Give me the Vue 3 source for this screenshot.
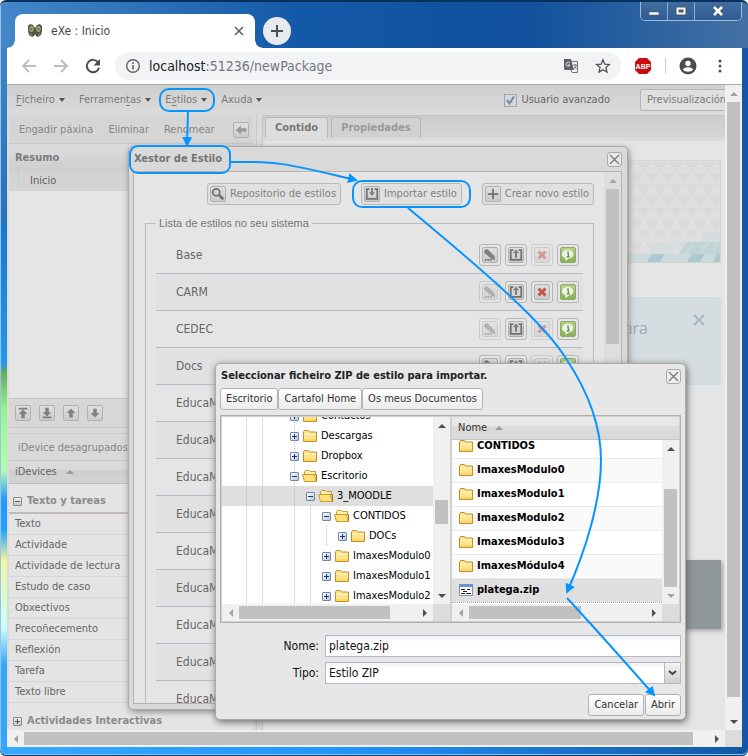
<script setup>
import { h, ref } from 'vue'

const advanced = ref(true)
const fileName = ref('platega.zip')
const fileType = ref('Estilo ZIP')

const menus = [
  { pre: '', key: 'F', post: 'icheiro' },
  { pre: 'Ferramen', key: 't', post: 'as' },
  { pre: 'E', key: 's', post: 'tilos' },
  { pre: 'Axuda', key: '', post: '' },
]
const moves = [
  { label: 'Subir de nivel', d: 'M3 2h10v2H3zM8 4l5 5h-3v5H6V9H3z' },
  { label: 'Baixar de nivel', d: 'M6 2h4v5h3l-5 5-5-5h3zM3 12h10v2H3z' },
  { label: 'Subir', d: 'M8 3l5 5h-3v5H6V8H3z' },
  { label: 'Baixar', d: 'M6 3h4v5h3l-5 5-5-5h3z' },
]
const idevices = ['Texto', 'Actividade', 'Actividade de lectura', 'Estudo de caso', 'Obxectivos', 'Precoñecemento', 'Reflexión', 'Tarefa', 'Texto libre']
const styles = [
  { name: 'Base', edit: true, remove: false },
  { name: 'CARM', edit: false, remove: true },
  { name: 'CEDEC', edit: false, remove: false },
  { name: 'Docs', edit: true, remove: false },
  ...Array.from({ length: 9 }, () => ({ name: 'EducaM', edit: true, remove: false })),
]
// Guides: "." empty cell, "|" dotted line; the last cell holds the expander.
const tree = [
  { guides: '.||.', open: false, name: 'Contactos' },
  { guides: '.||.', open: false, name: 'Descargas' },
  { guides: '.||.', open: false, name: 'Dropbox' },
  { guides: '.||.', open: true, name: 'Escritorio' },
  { guides: '.||.|', open: true, name: '3_MOODLE', selected: true },
  { guides: '.||.||', open: true, name: 'CONTIDOS' },
  { guides: '.||.|||', open: false, name: 'DOCs' },
  { guides: '.||.||', open: false, name: 'ImaxesModulo0' },
  { guides: '.||.||', open: false, name: 'ImaxesModulo1' },
  { guides: '.||.||', open: false, name: 'ImaxesModulo2' },
]
const files = ['CONTIDOS', 'ImaxesModulo0', 'ImaxesModulo1', 'ImaxesModulo2', 'ImaxesMódulo3', 'ImaxesMódulo4', 'platega.zip']

function ScrollBar(props) {
  const [before, thumb, after] = props.parts
  return h('div', { class: ['sb', props.dir], 'aria-hidden': 'true' }, [
    h('i', { class: ['sb-arrow', 'first', { off: props.offStart }] }),
    h('i', { style: { flexGrow: before } }),
    h('i', { class: 'sb-thumb', style: { flexGrow: thumb } }),
    h('i', { style: { flexGrow: after } }),
    h('i', { class: ['sb-arrow', 'last', { off: props.offEnd }] }),
  ])
}
ScrollBar.props = { dir: String, parts: Array, offStart: Boolean, offEnd: Boolean }

function Folder(props) {
  return h('svg', { class: 'folder', viewBox: '0 0 16 16', width: 16, height: 16, 'aria-hidden': 'true' }, props.open
    ? [
        h('path', { d: 'M2.5 12.5V3.5l1-1h4l1 1h5v3', fill: '#fff0b0', stroke: '#c99a30' }),
        h('path', { d: 'M2.5 13.5L.5 6.500H12l2.500 7z', fill: '#ffe27a', stroke: '#c99a30' }),
        h('path', { d: 'M12.500 6.500h2v7', fill: 'none', stroke: '#a87410' }),
      ]
    : [
        h('path', { d: 'M1.500 13.500V4l1-1.500h4l1 1.500h7v9.500z', fill: '#ffe48a', stroke: '#c0902c' }),
        h('path', { d: 'M2.500 6h11', stroke: '#fff7d0', fill: 'none' }),
        h('path', { d: 'M2 12h12', stroke: '#f8c83c', fill: 'none' }),
      ])
}
Folder.props = { open: Boolean }
</script>

<template>
  <div class="desktop">
    <header class="titlebar">
      <div class="tab">
        <svg class="exe" viewBox="0 0 16 16" width="16" height="16" aria-hidden="true">
          <path d="M1 3l2-2 3 1 2 3 2-3 3-1 2 2v5l-1 4-3 2-2-1-1-2-1 2-2 1-3-2-1-4z" fill="#575249" />
          <ellipse cx="4.500" cy="6" rx="2.300" ry="3" fill="#93a86a" />
          <ellipse cx="11.500" cy="6" rx="2.300" ry="3" fill="#93a86a" />
          <circle cx="4.500" cy="6" r="1" fill="#5d6a48" /><circle cx="11.500" cy="6" r="1" fill="#5d6a48" />
          <path d="M3 10l2 3M13 10l-2 3" stroke="#8c9468" />
        </svg>
        <span class="tab-name">eXe : Inicio</span>
        <button class="bare" aria-label="Pechar lapela">
          <svg viewBox="0 0 10 10" width="10" height="10"><path d="M1 1l8 8M9 1L1 9" stroke="#5f6368" stroke-width="1.600" /></svg>
        </button>
      </div>
      <button class="newtab" aria-label="Nova lapela">
        <svg viewBox="0 0 12 12" width="12" height="12"><path d="M6 0v12M0 6h12" stroke="#4a4d51" stroke-width="2" /></svg>
      </button>
      <div class="caption">
        <button aria-label="Minimizar"><svg viewBox="0 0 12 12" width="12" height="12"><path d="M1 7h10v3H1z" fill="#fff" stroke="#4a5568" stroke-width=".6" /></svg></button>
        <button aria-label="Maximizar"><svg viewBox="0 0 12 12" width="12" height="12"><path d="M2.500 3.500h7v5h-7z" fill="none" stroke="#47536a" stroke-width="4" /><path d="M2.500 3.500h7v5h-7z" fill="none" stroke="#fff" stroke-width="2" /></svg></button>
        <button class="wide" aria-label="Pechar"><svg viewBox="0 0 12 12" width="12" height="12"><path d="M2 2l8 8M10 2l-8 8" stroke="#47536a" stroke-width="4" /><path d="M2 2l8 8M10 2l-8 8" stroke="#fff" stroke-width="2.600" /></svg></button>
      </div>
    </header>

    <main class="window">
      <nav class="browserbar">
        <button class="bare nav" aria-label="Atrás"><svg viewBox="0 0 16 16" width="16" height="16"><path d="M15 8H2M8 2L2 8l6 6" fill="none" stroke="#babcbe" stroke-width="1.800" /></svg></button>
        <button class="bare nav" aria-label="Adiante"><svg viewBox="0 0 16 16" width="16" height="16"><path d="M1 8h13M8 2l6 6-6 6" fill="none" stroke="#babcbe" stroke-width="1.800" /></svg></button>
        <button class="bare nav" aria-label="Recargar"><svg viewBox="0 0 16 16" width="16" height="16"><path d="M13.200 4.600A6.200 6.200 0 1 0 14 9.800" fill="none" stroke="#4a4d51" stroke-width="2" /><path d="M15 1v6.500H8.500z" fill="#4a4d51" /></svg></button>
        <div class="omnibox">
          <svg viewBox="0 0 16 16" width="16" height="16" aria-hidden="true"><circle cx="8" cy="8" r="6.300" fill="none" stroke="#5f6368" stroke-width="1.400" /><path d="M8 7v4.500M8 4.300v1.600" stroke="#5f6368" stroke-width="1.600" /></svg>
          <span class="url"><b>localhost</b>:51236/newPackage</span>
          <svg viewBox="0 0 16 16" width="16" height="16" aria-hidden="true"><path d="M9 3.500h5.500v11H9l-1-2.500" fill="#f1f3f4" stroke="#72767a" /><path d="M1 1h7l3 11H2a1 1 0 0 1-1-1z" fill="#5f6368" /><path d="M6.800 5A2 2 0 1 0 7 7H5" fill="none" stroke="#e8eaec" /><path d="M10.500 7h3.500M12 6v1M13.200 7c-.3 2-1 3-2.500 4M11.500 8.500l2 2.500" fill="none" stroke="#72767a" /></svg>
          <svg viewBox="0 0 16 16" width="16" height="16" aria-hidden="true"><path d="M8 1.800l1.800 4.300 4.700.4-3.600 3 1.100 4.600L8 11.700l-4 2.400 1.100-4.600-3.600-3 4.700-.4z" fill="none" stroke="#4f5357" stroke-width="1.300" /></svg>
        </div>
        <svg class="abp" viewBox="0 0 18 18" width="18" height="18" aria-label="ABP"><path d="M5 1h8l4 4v8l-4 4H5l-4-4V5z" fill="#c70d0d" /><text x="9" y="12" text-anchor="middle">ABP</text></svg>
        <span class="rule"></span>
        <svg viewBox="0 0 18 18" width="18" height="18" aria-hidden="true"><circle cx="9" cy="9" r="8.500" fill="#4a4d51" /><circle cx="9" cy="6.500" r="2.700" fill="#fff" /><path d="M4 12.500c1.200-3 8.800-3 10 0-1.500 3-8.500 3-10 0z" fill="#fff" /></svg>
        <svg class="dots" viewBox="0 0 4 16" width="4" height="16" aria-hidden="true"><circle cx="2" cy="3" r="1.500" /><circle cx="2" cy="8" r="1.500" /><circle cx="2" cy="13" r="1.500" /></svg>
      </nav>

      <div class="viewport">
        <div class="page">
          <div class="menubar">
            <button v-for="m in menus" :key="m.post + m.pre" class="menu">{{ m.pre }}<u>{{ m.key }}</u>{{ m.post }}<i class="caret"></i></button>
            <label class="advanced"><span class="check"><input v-model="advanced" type="checkbox" /><svg v-if="advanced" viewBox="0 0 13 13" width="13" height="13" aria-hidden="true"><path d="M3 6l2.500 3.500L10 2.500" fill="none" stroke="#7584a8" stroke-width="2" /></svg></span>Usuario avanzado</label>
            <button class="preview">Previsualización</button>
          </div>
          <div class="columns">
            <aside>
              <div class="pagetools">
                <button class="bare">Engadir páxina</button>
                <button class="bare">Eliminar</button>
                <button class="bare">Renomear</button>
                <button class="tool" aria-label="Contraer"><svg viewBox="0 0 16 16" width="14" height="14"><path d="M2 8l6-5v3h6v4H8v3z" /></svg></button>
              </div>
              <section class="outline">
                <h2>Resumo</h2>
                <div class="node"><i></i>Inicio</div>
              </section>
              <div class="moves">
                <button v-for="m in moves" :key="m.label" class="tool" :aria-label="m.label"><svg viewBox="0 0 16 16" width="14" height="14"><path :d="m.d" /></svg></button>
              </div>
              <section class="idev">
                <div class="ungroup">iDevice desagrupados</div>
                <div class="idev-head">iDevices <i class="sort"></i></div>
                <h3><i class="exp"></i>Texto y tareas</h3>
                <ul><li v-for="d in idevices" :key="d">{{ d }}</li></ul>
                <h3 class="closed"><i class="exp plus"></i>Actividades Interactivas</h3>
              </section>
            </aside>
            <section class="work">
              <div class="worktabs">
                <button class="on">Contido</button><button>Propiedades</button>
              </div>
              <div class="canvas">
                <div class="banner">
                  <svg viewBox="0 0 100 102" width="100" height="102" aria-hidden="true">
                    <defs><pattern id="tri" width="16" height="23" patternUnits="userSpaceOnUse"><path d="M1 1h14L8 11.500zM-7 12.500H7L0 23zM9 12.500h14L16 23z" fill="#dadada" /></pattern></defs>
                    <rect width="100" height="102" fill="url(#tri)" />
                    <path d="M0 93h100v9H0z" fill="#cddadc" /><path d="M66 81h34v12H59z" fill="#c0d3d6" />
                    <path d="M86 70h14v11H79zM40 81h18l-7 12H31z" fill="#d5dddf" /><path d="M32 93h13l-6 9H26zM72 93h13l-6 9H66zM96 93h4v9H93z" fill="#aecace" />
                    <path d="M66 93l8-12M80 93l8-12M92 93l6-12M15 102l6-9M55 102l6-9" stroke="#cbdadd" stroke-width="2" />
                  </svg>
                </div>
                <div class="alert"><span>para</span><button class="bare" aria-label="Pechar aviso"><svg viewBox="0 0 12 12" width="12" height="12"><path d="M1 1l10 10M11 1L1 11" stroke="#a9bac3" stroke-width="2.400" /></svg></button></div>
                <div class="block"></div>
              </div>
            </section>
          </div>
        </div>
        <ScrollBar dir="v" :parts="[0, 594, 16]" off-start />
      </div>
      <div class="bottomscroll"><ScrollBar dir="h" :parts="[0, 668, 15]" off-start /><i class="corner"></i></div>
    </main>

    <section class="dialog styles" aria-label="Xestor de Estilo">
      <header><h2>Xestor de Estilo</h2><button class="close" aria-label="Pechar"><svg viewBox="0 0 11 11" width="11" height="11"><path d="M1 1l9 9M10 1l-9 9" /></svg></button></header>
      <div class="frame">
        <div class="styles-body">
          <div class="actions">
            <button class="act"><span class="tool"><svg viewBox="0 0 16 16" width="14" height="14"><circle cx="6" cy="6" r="4" class="ln" /><path d="M9 9l5 5" class="ln thick" /></svg></span>Repositorio de estilos</button>
            <button class="act"><span class="tool"><svg viewBox="0 0 16 16" width="14" height="14"><path d="M5 2.500H2v11h12v-11h-3M8 1v7" class="ln" /><path d="M4.500 6h7L8 10z" /></svg></span>Importar estilo</button>
            <button class="act"><span class="tool"><svg viewBox="0 0 16 16" width="14" height="14"><path d="M8 2v12M2 8h12" class="ln" /></svg></span>Crear novo estilo</button>
          </div>
          <fieldset>
            <legend>Lista de estilos no seu sistema</legend>
            <div v-for="(s, i) in styles" :key="i" class="style-row">
              <span>{{ s.name }}</span>
              <button :disabled="!s.edit" aria-label="Editar"><span class="tool"><svg viewBox="0 0 16 16" width="14" height="14"><path d="M2 2l3-1 8 8 1 5-5-2-8-7z" /><path d="M2 13.500h2M5 13.500h2M8 13.500h2" class="ln" /></svg></span></button>
              <button aria-label="Exportar"><span class="tool"><svg viewBox="0 0 16 16" width="14" height="14"><path d="M5 2.500H2v11h12v-11h-3M8 11V4" class="ln" /><path d="M4.500 6h7L8 1.500z" /></svg></span></button>
              <button :disabled="!s.remove" class="del" aria-label="Eliminar"><span class="tool"><svg viewBox="0 0 16 16" width="14" height="14"><path d="M4 4l8 8M12 4l-8 8" /></svg></span></button>
              <button class="info" aria-label="Información"><span class="tool"><svg viewBox="0 0 16 16" width="14" height="14"><path d="M8 2c8 0 8 10 1 10l-4 3v-3.500C-1 10 0 2 8 2z" fill="#edf1e6" /><path d="M7 6.500h1.500V10M8 3.500v1.800M6.500 10h3.500" fill="none" stroke="#71954c" stroke-width="1.500" /></svg></span></button>
            </div>
          </fieldset>
        </div>
        <ScrollBar dir="v" :parts="[0, 155, 342]" off-start />
      </div>
    </section>

    <section class="dialog picker" aria-label="Seleccionar ficheiro">
      <header><h2>Seleccionar ficheiro ZIP de estilo para importar.</h2><button class="close" aria-label="Pechar"><svg viewBox="0 0 11 11" width="11" height="11"><path d="M1 1l9 9M10 1l-9 9" /></svg></button></header>
      <div class="places"><button class="btn">Escritorio</button><button class="btn">Cartafol Home</button><button class="btn">Os meus Documentos</button></div>
      <div class="panes">
        <div class="pane">
          <div class="pane-main">
            <div class="clip">
              <ul class="tree">
                <li v-for="(n, i) in tree" :key="i" :class="{ selected: n.selected }">
                  <i v-for="(g, j) in n.guides" :key="j" class="guide" :class="{ line: g === '|' }"></i>
                  <i class="guide" :class="{ line: n.guides.length === 4 }"><i class="exp blue" :class="{ plus: !n.open }"></i></i>
                  <Folder :open="n.open" /><span>{{ n.name }}</span>
                </li>
              </ul>
            </div>
            <ScrollBar dir="v" :parts="[66, 23, 63]" />
          </div>
          <div class="pane-foot"><ScrollBar dir="h" :parts="[0, 151, 26]" off-start /><i class="corner"></i></div>
        </div>
        <div class="pane">
          <div class="col-head"><span>Nome</span><i class="sort"></i></div>
          <div class="pane-main">
            <div class="clip">
              <table class="files" aria-label="Nome">
                <tbody>
                  <tr v-for="(f, i) in files" :key="f" :class="{ picked: i === 6 }">
                    <td><div class="cell">
                      <svg v-if="i === 6" class="folder" viewBox="0 0 16 16" width="16" height="16" aria-hidden="true"><path d="M1.500 2.500h13v11h-13z" fill="#fff" stroke="#7b8fb8" /><path d="M1 2h14v3H1z" fill="#6f93cc" /><path d="M3 7.500h4M5 9.500h4M3 11.500h4M9 7.500h3M8 11.500h5" stroke="#222" /></svg>
                      <Folder v-else /><span>{{ f }}</span>
                    </div></td>
                  </tr>
                </tbody>
              </table>
            </div>
            <ScrollBar dir="v" :parts="[32, 99, 0]" off-end />
          </div>
          <div class="pane-foot"><ScrollBar dir="h" :parts="[0, 112, 64]" off-start /><i class="corner"></i></div>
        </div>
      </div>
      <form @submit.prevent>
        <label for="fname">Nome:</label><input id="fname" v-model="fileName" type="text" />
        <label for="ftype">Tipo:</label>
        <div class="combo"><select id="ftype" v-model="fileType"><option>Estilo ZIP</option></select><span class="trigger"><svg viewBox="0 0 9 6" width="9" height="6"><path d="M1 1l3.500 3L8 1" fill="none" stroke="#444" stroke-width="2" /></svg></span></div>
        <div class="submit"><button class="btn">Cancelar</button><button class="btn">Abrir</button></div>
      </form>
    </section>

    <svg class="marks" viewBox="0 0 748 756" width="748" height="756" aria-hidden="true">
      <defs><marker id="tip" viewBox="0 0 10 10" refX="8" refY="5" markerWidth="10" markerHeight="10" markerUnits="userSpaceOnUse" orient="auto"><path d="M0 0l10 5-10 5z" fill="#0894ff" /></marker></defs>
      <g fill="none" stroke="#0894ff" stroke-width="2">
        <rect x="160" y="89" width="54" height="22" rx="9" />
        <rect x="130" y="146" width="100" height="27" rx="8" />
        <rect x="353" y="181" width="117" height="26" rx="9" />
        <g marker-end="url(#tip)">
          <path d="M188 111l-1 34" />
          <path d="M231 162c50-1 60 3 125 18" />
          <path d="M408 208C490 276 545 324 567 360C590 395 601 430 601 460C601 500 586 550 567 592" />
          <path d="M567 598C592 625 625 662 654 695" />
        </g>
      </g>
    </svg>
  </div>
</template>

<style>
body { margin: 0; }
.sb { display: flex; flex: none; background: #f0f0f0; }
.sb.v { flex-direction: column; width: 17px; }
.sb.h { height: 17px; flex: 1; min-width: 0; }
.sb > i { flex: 0 0 0; }
.sb .sb-thumb { background: #c1c1c1; }
.sb.v .sb-thumb { margin: 0 2px; }
.sb.h .sb-thumb { margin: 2px 0; }
.sb .sb-arrow { flex: 0 0 17px; display: grid; place-items: center; }
.sb .sb-arrow::after { content: ""; border: 4px solid transparent; }
.sb.v .first::after { border-top: 0; border-bottom-color: #505050; }
.sb.v .last::after { border-bottom: 0; border-top-color: #505050; }
.sb.h .first::after { border-left: 0; border-right-color: #505050; }
.sb.h .last::after { border-right: 0; border-left-color: #505050; }
.sb.v .first.off::after { border-bottom-color: #a3a3a3; }
.sb.v .last.off::after { border-top-color: #a3a3a3; }
.sb.h .first.off::after { border-right-color: #a3a3a3; }
.folder { flex: none; display: block; }
</style>

<style scoped>
* { box-sizing: border-box; }
.desktop {
  position: relative; display: flex; flex-direction: column; height: 100vh; min-height: 700px; overflow: hidden;
  padding: 0 6px 9px 7px; font: 12px/16px "DejaVu Sans Condensed", Tahoma, "Noto Sans", sans-serif; color: #666;
  border-top: 2px solid #06305e; border-radius: 6px;
  box-shadow: inset 0 -1px #0b3c70, inset 0 -2px #8cc4f0, inset 1px 0 #9cc3e6;
  background:
    linear-gradient(90deg, #4487c9, #1459a8 40%, #10509c 70%, #4371a4) 0 0 / 100% 46px no-repeat,
    linear-gradient(#4487c9, #2873bb 29%, #1878d0 29.500%, #2298ee 48%, #67a860 49%, #90f58a 54%, #b5ffb0 62%, #2398ff 66%, #20a0ff 70%, #f0f79a 74%, #c8ffff 83%, #30a5ff 88%) 0 0 / 8px 100% no-repeat,
    linear-gradient(90deg, #38a9ff, #2095ff 45%, #1257a5);
}
button { font: inherit; color: inherit; padding: 0; margin: 0; white-space: nowrap; }
h2, h3, ul { margin: 0; padding: 0; list-style: none; font-size: inherit; }
.bare { border: 0; background: none; display: inline-flex; }
.titlebar { display: flex; align-items: flex-end; height: 46px; flex: none; padding-left: 8px; }
.tab { position: relative; display: flex; align-items: center; width: 240px; height: 34px; padding: 0 11px 0 12px; background: #fff; border-radius: 8px 8px 0 0; color: #45494d; }
.tab::before, .tab::after { content: ""; position: absolute; bottom: 0; width: 7px; height: 7px; }
.tab::before { right: 100%; background: radial-gradient(circle at 0 0, transparent 6px, #fff 7px); }
.tab::after { left: 100%; background: radial-gradient(circle at 100% 0, transparent 6px, #fff 7px); }
.tab-name { flex: 1; padding-left: 8px; }
.newtab { display: grid; place-items: center; width: 28px; height: 28px; margin: 0 0 3px 8px; border: 0; border-radius: 50%; background: #e8eaed; }
.caption { display: flex; align-self: flex-start; margin-left: auto; border: 1px solid #9db8d8; border-top: 0; border-radius: 0 0 5px 5px; overflow: hidden; }
.caption button { display: grid; place-items: center; width: 27px; height: 18px; border: 0; border-right: 1px solid #8eabce; background: linear-gradient(#416c9f, #2f5c94); }
.caption .wide { width: 46px; border-right: 0; }
.window { display: flex; flex-direction: column; flex: 1; min-height: 0; }
.browserbar { display: flex; align-items: center; height: 36px; flex: none; background: #fff; padding: 0 20px 0 14px; }
.nav { margin-right: 16px; }
.nav + .nav + .nav { margin-right: 14px; }
.omnibox { display: flex; align-items: center; flex: 1; height: 28px; margin-right: 13px; padding: 0 10px; border-radius: 14px; background: #f1f3f4; gap: 16px; }
.url { flex: 1; margin-left: -8px; font-size: 14px; color: #74787c; }
.url b { font-weight: normal; color: #202124; }
.abp text { font: bold 7px "Liberation Sans", sans-serif; fill: #fff; }
.rule { width: 1px; height: 16px; margin: 0 13px; background: #ccc; }
.dots { margin-left: 21px; fill: #4a4d51; }
.viewport { display: flex; flex: 1; min-height: 0; border-top: 1px solid #a9a9a9; }
.page { flex: 1; min-width: 0; display: flex; flex-direction: column; background: #dadada; overflow: hidden; }
.menubar { display: flex; align-items: center; flex: none; height: 30px; padding-left: 9px; background: linear-gradient(#cfcfcf, #dbdbdb); color: #7a7a7a; font-size: 11px; }
.menu { display: flex; align-items: center; border: 0; background: none; margin-right: 14px; }
.menu u { text-underline-offset: 2px; }
.caret { margin-left: 4px; border: 3px solid transparent; border-top: 4px solid #555; border-bottom: 0; }
.advanced { display: flex; align-items: center; gap: 4px; margin-left: auto; margin-right: 30px; color: #666; }
.check { display: grid; }
.check > * { grid-area: 1 / 1; }
.advanced input { width: 13px; height: 13px; margin: 0; appearance: none; border: 1px solid #a0a4ac; background: #d5d8de; }
.check svg { pointer-events: none; }
.preview { width: 85px; height: 22px; padding-left: 6px; border: 1px solid #b5b5b5; border-right: 0; border-radius: 3px 0 0 3px; background: #dfdfdf; text-align: left; overflow: hidden; }
.columns { display: flex; flex: 1; min-height: 0; }
aside { display: flex; flex-direction: column; width: 250px; flex: none; padding: 1px 3px 0 2px; border-right: 1px solid #c9c9c9; }
.pagetools { display: flex; align-items: center; gap: 15px; height: 28px; flex: none; padding: 0 4px 0 10px; background: #d5d5d5; border-bottom: 1px solid #c8c8c8; color: #858585; font-size: 11px; }
.tool { display: inline-grid; place-items: center; width: 16px; height: 16px; border: 1px solid #b0b0b0; border-radius: 2px; background: linear-gradient(#dfdfdf, #cbcbcb); fill: #808080; }
.pagetools .tool { margin-left: auto; fill: #999; }
.outline { height: 252px; margin-top: 2px; background: #e5e5e5; }
.outline h2 { height: 25px; padding: 4px 6px; background: linear-gradient(#dcdcdc, #cecece); color: #7c7c7c; font-size: 11px; }
.node { display: flex; align-items: center; height: 20px; padding-left: 9px; gap: 5px; background: #d4d4d4; color: #606060; font-size: 11px; }
.node i { width: 7px; height: 11px; border: dotted #c0c0c0; border-width: 0 0 1px 1px; margin-top: -10px; }
.moves { display: flex; align-items: center; gap: 8px; height: 30px; padding-left: 6px; border-top: 1px solid #c4c4c4; border-bottom: 1px solid #c4c4c4; background: #d7d7d7; }
.idev { flex: 1; min-height: 0; overflow: hidden; margin-top: 5px; background: #e4e4e4; font-size: 11px; }
.ungroup { height: 28px; padding: 6px 9px; background: #d9d9d9; border-top: 1px solid #c8c8c8; border-bottom: 1px solid #c6c6c6; color: #858585; }
.idev-head { display: flex; align-items: center; gap: 9px; height: 23px; padding-left: 6px; background: linear-gradient(#dadada, #dadada 40%, #cecece 40%, #d4d4d4); border-bottom: 1px solid #bebebe; }
.sort { border: 4px solid transparent; border-top: 0; border-bottom-color: #999; }
.idev h3 { display: flex; align-items: center; gap: 5px; height: 30px; padding: 6px 4px 0; border-bottom: 2px solid #c2baba; color: #8b8b8b; white-space: nowrap; }
.idev .closed { border: 0; }
.exp { position: relative; flex: none; width: 9px; height: 9px; border: 1px solid #888; border-radius: 1px; background: linear-gradient(#f0f0f0, #c9c9c9); color: #555; }
.exp::before, .exp.plus::after { content: ""; position: absolute; left: 1px; right: 1px; top: 3px; height: 1px; background: currentColor; }
.exp.plus::after { left: 3px; right: 3px; top: 1px; height: 5px; }
.exp.blue { border-color: #7287a8; background: linear-gradient(135deg, #fff, #b9c8dd); color: #1c3458; }
.idev li { height: 21px; padding: 2px 6px; border-bottom: 1px solid #d5d5d5; color: #666; }
.work { flex: 1; min-width: 0; display: flex; flex-direction: column; margin-left: 5px; border-left: 1px solid #c6c6c6; }
.worktabs { display: flex; align-items: flex-end; gap: 3px; height: 23px; padding: 0 2px; background: linear-gradient(#ccc, #d5d5d5); border-top: 1px solid #c6c6c6; }
.worktabs button { height: 21px; padding: 0 9px; border: 1px solid #b9b9b9; border-bottom: 0; border-radius: 3px 3px 0 0; background: #d1d1d1; font-size: 11px; font-weight: bold; color: #999; }
.worktabs .on { background: #ddd; color: #777; }
.canvas { flex: 1; padding: 19px 4px 0 100px; border-top: 3px solid #dcdcdc; background: #e5e5e5; }
.banner { display: flex; justify-content: flex-end; height: 103px; overflow: hidden; border: 1px solid #d3d3d3; background: #dfdfdf; }
.alert { display: flex; justify-content: flex-end; gap: 45px; height: 88px; margin-top: 34px; padding: 20px 15px 0 0; border: 1px solid #c8dde4; border-radius: 4px; background: #d5dde0; color: #9aabb3; font: 16px/20px "Open Sans", sans-serif; }
.alert button { height: 12px; margin-top: -4px; }
.block { height: 69px; margin-top: 175px; background: #8f9799; box-shadow: 2px 2px 4px #aaa; }
.bottomscroll { display: flex; flex: none; height: 17px; }
.corner { width: 17px; height: 17px; flex: none; background: #dcdcdc; }
.dialog { position: absolute; border: 1px solid #aaa; border-radius: 5px; box-shadow: 1px 2px 6px #888; }
.dialog header { display: flex; align-items: center; justify-content: space-between; height: 24px; padding-left: 1px; }
.close { display: grid; place-items: center; width: 15px; height: 15px; border: 1px solid #aaa; border-radius: 3px; background: #e8e8e8; stroke: #777; stroke-width: 1.200; }
.styles { display: flex; flex-direction: column; left: 128px; top: 144px; width: 500px; height: 564px; padding: 0 5px 5px 4px; background: #d9d9d9; color: #737373; }
.styles h2 { color: #747474; font-size: 11px; }
.frame { display: flex; flex: 1; min-height: 0; border: 1px solid #b8b1b1; background: #e5e5e5; }
.styles-body { flex: 1; min-width: 0; overflow: hidden; padding: 11px 10px 0 11px; }
.styles :deep(.sb) { background: #dedede; }
.actions { display: flex; justify-content: flex-end; gap: 20px; }
.act { display: flex; align-items: center; gap: 4px; height: 22px; padding: 0 4px 0 2px; border: 1px solid #b9b9b9; border-radius: 3px; background: #e0e0e0; font-size: 11px; color: #808080; }
.ln { fill: none; stroke: #707070; stroke-width: 2; }
.thick { stroke-width: 3; }
fieldset { margin: 11px 0 0; padding: 7px 10px; border: 1px solid #b9bac2; min-width: 0; }
legend { padding: 0 3px; font: 11px/14px "Liberation Sans", sans-serif; color: #777; }
.style-row { display: flex; align-items: center; gap: 4px; height: 37px; padding: 0 4px 0 20px; border-bottom: 1px solid #b9bac4; color: #666; }
.style-row:nth-of-type(even) { background: #e1e1e1; }
.style-row > span { flex: 1; }
.style-row > button { display: grid; place-items: center; width: 22px; height: 22px; border: 1px solid #b5b5b5; border-radius: 3px; background: #e6e6e6; }
.style-row > button:disabled { opacity: .5; }
.del svg { stroke: #c0564c; stroke-width: 3.500; }
.info .tool { background: linear-gradient(#b3d282, #88b058); border-color: #8aa96b; }
.picker { left: 215px; top: 361px; width: 471px; padding: 0 4px 3px; background: #e7e7e7; color: #333; box-shadow: 1px 2px 7px #666; }
.picker h2 { font-size: 11px; color: #222; }
.picker .close { background: #eee; }
.places { display: flex; }
.btn { height: 22px; padding: 0 5px; border: 1px solid #b3b3b3; border-radius: 3px; background: linear-gradient(#fff, #ececec); font-size: 11px; color: #333; }
.panes { display: grid; grid-template-columns: 230px 1fr; height: 208px; margin-top: 5px; border: 1px solid #b5adad; background: #d0d0d0; padding: 1px; }
.pane { display: flex; flex-direction: column; min-width: 0; min-height: 0; background: #fff; }
.pane:first-child { border-right: 2px solid #d0d0d0; }
.pane-main { display: flex; flex: 1; min-height: 0; }
.clip { flex: 1; min-width: 0; overflow: hidden; }
.pane-foot { display: flex; flex: none; }
.tree { margin-top: -11px; font-size: 11px; color: #000; }
.tree li { display: flex; align-items: center; height: 20px; white-space: nowrap; }
.tree span { padding-left: 3px; }
.selected { background: #dfdfdf; }
.guide { display: grid; place-items: center; flex: none; width: 16px; height: 20px; }
.line { background: repeating-linear-gradient(#bbb 0 1px, transparent 1px 2px) 8px 0 / 1px 100% no-repeat; }
.col-head { display: flex; align-items: center; gap: 8px; height: 23px; flex: none; padding-left: 6px; background: linear-gradient(#e8e8e8 40%, #dadada 40%); border-bottom: 1px solid #c5c5c5; font-size: 11px; }
.files { width: 100%; margin-top: -6px; border-collapse: collapse; font-size: 11px; font-weight: bold; color: #000; }
.files tr { height: 24px; border-bottom: 1px solid #eaeaea; }
.files tr:nth-child(even) { background: #fafafa; }
.files .picked { background: #dfdfdf; border-top: 1px dotted #aaa; border-bottom: 1px dotted #aaa; }
.files td { padding: 0 6px; }
.cell { display: flex; align-items: center; gap: 3px; }
form { display: grid; grid-template-columns: 99px 1fr; column-gap: 6px; row-gap: 5px; margin-top: 12px; align-items: center; color: #111; }
form label { text-align: right; }
form input, form select { width: 100%; height: 22px; padding: 0 3px; border: 1px solid #b5b8c8; border-radius: 0; background: linear-gradient(#eef0f0, #fff 5px); font: inherit; color: #111; appearance: none; }
.combo { display: flex; position: relative; }
.trigger { position: absolute; right: 0; top: 0; display: grid; place-items: center; width: 17px; height: 22px; border: 1px solid #b5b8c8; background: linear-gradient(#f4f4f4, #cfcfcf); pointer-events: none; }
.submit { grid-column: 1 / -1; display: flex; justify-content: flex-end; gap: 1px; margin-top: 5px; }
.marks { position: absolute; left: 0; top: -2px; pointer-events: none; }
</style>
